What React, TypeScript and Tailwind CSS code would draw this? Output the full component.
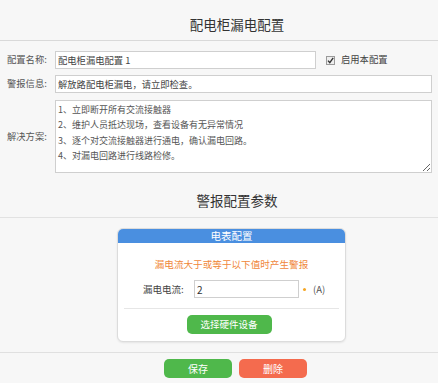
import React from "react";

const font = { fontFamily: '"Noto Sans CJK SC", "Microsoft YaHei", sans-serif' };

export default function App() {
  return (
    <div className="w-[438px] h-[383px] bg-[#f7f7f7] text-[#555] overflow-hidden" style={font}>
      {/* page title */}
      <div className="h-[41px] pt-[14px] border-b border-[#d9d9d9] text-center pl-[36px] text-[13.5px] leading-[20px] text-[#333]">
        配电柜漏电配置
      </div>

      {/* form */}
      <div className="pt-[10px] pl-[7px] pr-[6px] flex flex-col text-[9.3px]">
        <div className="flex items-center h-[18px]">
          <span className="w-[48px] shrink-0">配置名称:</span>
          <input
            readOnly
            value="配电柜漏电配置 1"
            className="w-[261px] h-[18px] border border-[#cfcfcf] bg-white px-[2px] text-[9.3px] text-[#444] outline-none"
          />
          <span className="ml-[10px] flex items-center gap-[6px] text-[#444]">
            <svg width="9" height="9" viewBox="0 0 9 9">
              <rect x="0.5" y="0.5" width="8" height="8" fill="#eee" stroke="#9a9a9a" />
              <path d="M2 4.6 L3.8 6.6 L7.2 1.8" fill="none" stroke="#333" strokeWidth="1.4" />
            </svg>
            启用本配置
          </span>
        </div>
        <div className="flex items-center h-[18px] mt-[6px]">
          <span className="w-[48px] shrink-0">警报信息:</span>
          <input
            readOnly
            value="解放路配电柜漏电，请立即检查。"
            className="w-[377px] h-[18px] border border-[#cfcfcf] bg-white px-[2px] text-[9.3px] text-[#444] outline-none"
          />
        </div>
        <div className="flex items-center mt-[7px]">
          <span className="w-[48px] shrink-0">解决方案:</span>
          <textarea
            readOnly
            value={"1、立即断开所有交流接触器\n2、维护人员抵达现场，查看设备有无异常情况\n3、逐个对交流接触器进行通电，确认漏电回路。\n4、对漏电回路进行线路检修。"}
            className="w-[377px] h-[73px] border border-[#cfcfcf] bg-white px-[2px] py-[1px] text-[9px] leading-[15.3px] text-[#555] outline-none"
          />
        </div>
      </div>

      {/* section title */}
      <div className="pt-[17px] pb-[7px] leading-[20px] border-b border-[#e2e2e2] text-center pl-[36px] text-[13.5px] text-[#333]">
        警报配置参数
      </div>

      {/* card */}
      <div className="ml-[117px] mt-[10px] w-[229px] bg-white border border-[#dcdcdc] rounded-[6px] overflow-hidden shadow-[0_1px_2px_rgba(0,0,0,0.08)] pb-[7px]">
        <div className="h-[14px] bg-[#4a8fe0] text-white text-center text-[10.5px] leading-[14px]">电表配置</div>
        <div className="mt-[14px] text-center text-[9.6px] leading-[14px] text-[#f0873a]">漏电流大于或等于以下值时产生警报</div>
        <div className="mt-[9px] pl-[25px] flex items-center h-[18px]">
          <span className="w-[51px] text-[9.5px] text-[#444]">漏电电流:</span>
          <input
            readOnly
            value="2"
            className="w-[105px] h-[18px] border border-[#cfcfcf] bg-white px-[2px] text-[10px] text-[#333] outline-none"
          />
          <span className="ml-[4px] w-[3px] h-[3px] rounded-full bg-[#f5a623]" />
          <span className="ml-[7px] text-[9.5px] text-[#555]">(A)</span>
        </div>
        <div className="mx-[6px] mt-[10px] border-t border-[#e6e6e6]" />
        <div className="mt-[6px] flex justify-center pr-[5px]">
          <div className="w-[85px] h-[19px] rounded-[5px] bg-[#4fb84b] text-white text-[9.5px] leading-[19px] text-center">选择硬件设备</div>
        </div>
      </div>

      {/* bottom */}
      <div className="mt-[10px] border-t border-[#e0e0e0]" />
      <div className="mt-[6px] pl-[164px] flex gap-[7px]">
        <div className="w-[68px] h-[19px] rounded-[5px] bg-[#4fb84b] text-white text-[10px] leading-[19px] text-center">保存</div>
        <div className="w-[68px] h-[19px] rounded-[5px] bg-[#f46b4e] text-white text-[10px] leading-[19px] text-center">删除</div>
      </div>
    </div>
  );
}
